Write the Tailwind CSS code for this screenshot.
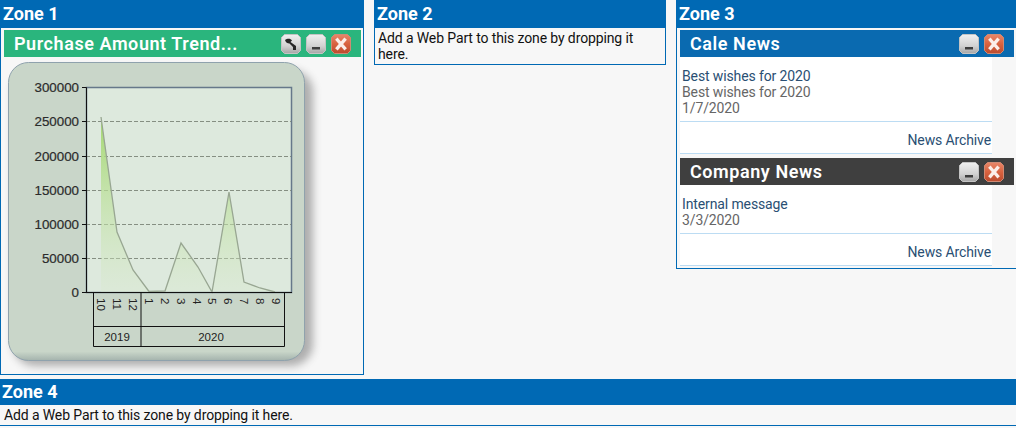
<!DOCTYPE html>
<html lang="en">
  <head>
    <meta charset="UTF-8">
    <script src="https://cdn.jsdelivr.net/npm/@tailwindcss/browser@4"></script>
    <title>Web Part Zones</title>
  </head>
  <body class="w-[1016px] h-[428px] overflow-hidden bg-[#f7f7f7] font-['Roboto',sans-serif] text-[14px] tracking-[-0.12px] leading-[16px] text-[#111]">
    <svg class="absolute w-0 h-0">
      <defs>
        <linearGradient id="btnGray" x1="0" y1="0" x2="0" y2="1">
          <stop offset="0" stop-color="#f0f0f0" />
          <stop offset="0.6" stop-color="#d2d2d2" />
          <stop offset="1" stop-color="#a6a6a6" />
        </linearGradient>
        <linearGradient id="btnRed" x1="0" y1="0" x2="0" y2="1">
          <stop offset="0" stop-color="#e8876a" />
          <stop offset="0.5" stop-color="#d8623f" />
          <stop offset="1" stop-color="#bb4b2e" />
        </linearGradient>
        <symbol id="btnMin" viewBox="0 0 20 20">
          <path d="M3.500 .5h13L19.500 3.500v13L16.500 19.500h-13L.5 16.500v-13z" fill="url(#btnGray)" stroke="#c4c4c4" />
          <rect x="6" y="13" width="8" height="2.500" fill="#3d3d3d" />
        </symbol>
        <symbol id="btnClose" viewBox="0 0 20 20">
          <path d="M3.500 .5h13L19.500 3.500v13L16.500 19.500h-13L.5 16.500v-13z" fill="url(#btnRed)" stroke="#cf8a74" />
          <path d="M6.500 6l7 8M13.500 6l-7 8" stroke="#fbeee9" stroke-width="3.400" stroke-linecap="square" />
        </symbol>
        <symbol id="btnWrench" viewBox="0 0 20 20">
          <path d="M3.500 .5h13L19.500 3.500v13L16.500 19.500h-13L.5 16.500v-13z" fill="url(#btnGray)" stroke="#c4c4c4" />
          <path d="M4 6c2-1.500 5.500-2 7 .5l-1.500 1.500L15 12v4h-3v-3L8.500 9.500C6.500 9.500 4.500 8.500 4 6z" fill="#262626" />
        </symbol>
      </defs>
    </svg>

    <div class="flex items-start gap-[10px] w-[1016px]">
      <!-- zone 1 -->
      <section class="w-[364px] h-[375px] border border-[#0069b4] border-t-0">
        <h2 class="h-[28px] pl-[2px] bg-[#0069b4] text-white text-[18px] tracking-normal leading-[28px] font-bold">Zone 1</h2>
        <div class="mt-[2px] mx-[3px] h-[27px] w-[357px] bg-[#2ab57d] flex items-center pl-[10px] pr-[10px]">
          <span class="text-white text-[18px] font-semibold tracking-[0.57px] grow">Purchase Amount Trend...</span>
          <div class="flex gap-[5px]">
            <svg class="w-[20px] h-[20px]"><use href="#btnWrench" /></svg>
            <svg class="w-[20px] h-[20px]"><use href="#btnMin" /></svg>
            <svg class="w-[20px] h-[20px]"><use href="#btnClose" /></svg>
          </div>
        </div>
        <svg class="block -ml-px" width="330" height="317" viewBox="0 57 330 317">
          <defs>
            <filter id="cardShadow" x="-10%" y="-10%" width="120%" height="120%">
              <feGaussianBlur stdDeviation="4" />
            </filter>
            <linearGradient id="cardFill" x1="0" y1="0" x2="0" y2="1">
              <stop offset="0" stop-color="#c9d6c9" />
              <stop offset="0.97" stop-color="#c9d6c9" />
              <stop offset="1" stop-color="#a4b3ad" />
            </linearGradient>
            <linearGradient id="areaFill" gradientUnits="userSpaceOnUse" x1="0" y1="117" x2="0" y2="292">
              <stop offset="0" stop-color="#a3d86e" />
              <stop offset="1" stop-color="#d8e9cc" stop-opacity="0.3" />
            </linearGradient>
          </defs>
          <rect x="13" y="70" width="300" height="296" rx="22" fill="#555" opacity="0.45" filter="url(#cardShadow)" />
          <rect x="8.500" y="62.500" width="296" height="298" rx="20" fill="url(#cardFill)" stroke="#8fa2ad" />
          <rect x="86.500" y="87.500" width="205" height="205" fill="#dde9dd" stroke="#66788a" stroke-width="1.500" />
          <g stroke="#858f82" stroke-dasharray="4 2">
            <line x1="86" y1="121.500" x2="291" y2="121.500" />
            <line x1="86" y1="156.500" x2="291" y2="156.500" />
            <line x1="86" y1="190.500" x2="291" y2="190.500" />
            <line x1="86" y1="224.500" x2="291" y2="224.500" />
            <line x1="86" y1="258.500" x2="291" y2="258.500" />
          </g>
          <path d="M101 292V117L117 232L133 270L149 291.500L165 291L181 243L198 267L212 292L229 192L244 282L260 288L275 292z" fill="url(#areaFill)" />
          <path d="M101 117L117 232L133 270L149 291.500L165 291L181 243L198 267L212 292L229 192L244 282L260 288L275 292" fill="none" stroke="#98a692" stroke-width="1.300" />
          <path d="M82 87.500H86.500V292.500M82 121.500H86M82 156.500H86M82 190.500H86M82 224.500H86M82 258.500H86M82 292.500H292" fill="none" stroke="#111" />
          <path d="M93.500 292V346.500H284.500V292M141 292V346.500M93.500 326.500H284.500" fill="none" stroke="#111" />
          <g font-family="Liberation Sans" font-size="13.330" letter-spacing="0" fill="#2b2b2b" stroke="#2b2b2b" stroke-width="0.200" text-anchor="end">
            <text x="79" y="92">300000</text>
            <text x="79" y="126">250000</text>
            <text x="79" y="161">200000</text>
            <text x="79" y="195">150000</text>
            <text x="79" y="229">100000</text>
            <text x="79" y="263">50000</text>
            <text x="79" y="297">0</text>
          </g>
          <g font-family="Liberation Sans" font-size="11.500" letter-spacing="0" fill="#222">
            <text transform="translate(97 298) rotate(90)">10</text>
            <text transform="translate(113 298) rotate(90)">11</text>
            <text transform="translate(129 298) rotate(90)">12</text>
            <text transform="translate(145 298) rotate(90)">1</text>
            <text transform="translate(161 298) rotate(90)">2</text>
            <text transform="translate(177 298) rotate(90)">3</text>
            <text transform="translate(193 298) rotate(90)">4</text>
            <text transform="translate(208 298) rotate(90)">5</text>
            <text transform="translate(224 298) rotate(90)">6</text>
            <text transform="translate(240 298) rotate(90)">7</text>
            <text transform="translate(256 298) rotate(90)">8</text>
            <text transform="translate(272 298) rotate(90)">9</text>
            <text x="117" y="341" text-anchor="middle">2019</text>
            <text x="211" y="341" text-anchor="middle">2020</text>
          </g>
        </svg>
      </section>

      <!-- zone 2 -->
      <section class="w-[292px] h-[65px] border border-[#0069b4] border-t-0">
        <h2 class="h-[28px] pl-[2px] bg-[#0069b4] text-white text-[18px] tracking-normal leading-[28px] font-bold">Zone 2</h2>
        <p class="px-[3px] pt-[2px]">Add a Web Part to this zone by dropping it here.</p>
      </section>

      <!-- zone 3 -->
      <section class="w-[340px] h-[269px] border border-[#0069b4] border-t-0 border-r-0">
        <h2 class="h-[28px] pl-[2px] bg-[#0069b4] text-white text-[18px] tracking-normal leading-[28px] font-bold">Zone 3</h2>
        <div class="mt-[2px] ml-[3px] mr-[2px] h-[27px] bg-[#0a6ab0] flex items-center pl-[10px] pr-[10px]">
          <span class="text-white text-[18px] font-semibold tracking-[0.57px] grow">Cale News</span>
          <div class="flex gap-[5px]">
            <svg class="w-[20px] h-[20px]"><use href="#btnMin" /></svg>
            <svg class="w-[20px] h-[20px]"><use href="#btnClose" /></svg>
          </div>
        </div>
        <div class="ml-[3px] w-[312px] bg-white">
          <div class="h-[65px] pt-[11px] px-[2px] border-b border-[#bcdcf3]">
            <div class="text-[#2a4f73]">Best wishes for 2020</div>
            <div class="text-[#666]">Best wishes for 2020</div>
            <div class="text-[#666]">1/7/2020</div>
          </div>
          <div class="h-[32px] pt-[10px] pr-[1px] text-right text-[#2a4f73] border-b border-[#bcdcf3]">News Archive</div>
        </div>
        <div class="mt-[4px] ml-[3px] mr-[2px] h-[27px] bg-[#3f3f3f] flex items-center pl-[10px] pr-[10px]">
          <span class="text-white text-[18px] font-semibold tracking-[0.57px] grow">Company News</span>
          <div class="flex gap-[5px]">
            <svg class="w-[20px] h-[20px]"><use href="#btnMin" /></svg>
            <svg class="w-[20px] h-[20px]"><use href="#btnClose" /></svg>
          </div>
        </div>
        <div class="ml-[3px] w-[312px] bg-white">
          <div class="h-[49px] pt-[11px] px-[2px] border-b border-[#bcdcf3]">
            <div class="text-[#2a4f73]">Internal message</div>
            <div class="text-[#666]">3/3/2020</div>
          </div>
          <div class="h-[32px] pt-[10px] pr-[1px] text-right text-[#2a4f73] border-b border-[#bcdcf3]">News Archive</div>
        </div>
      </section>
    </div>

    <!-- zone 4 -->
    <section class="mt-[4px] h-[47px] border-b border-[#0069b4]">
      <h2 class="h-[26px] pl-[2px] bg-[#0069b4] text-white text-[18px] tracking-normal leading-[26px] font-bold">Zone 4</h2>
      <p class="px-[4px] pt-[2px]">Add a Web Part to this zone by dropping it here.</p>
    </section>
  </body>
</html>
